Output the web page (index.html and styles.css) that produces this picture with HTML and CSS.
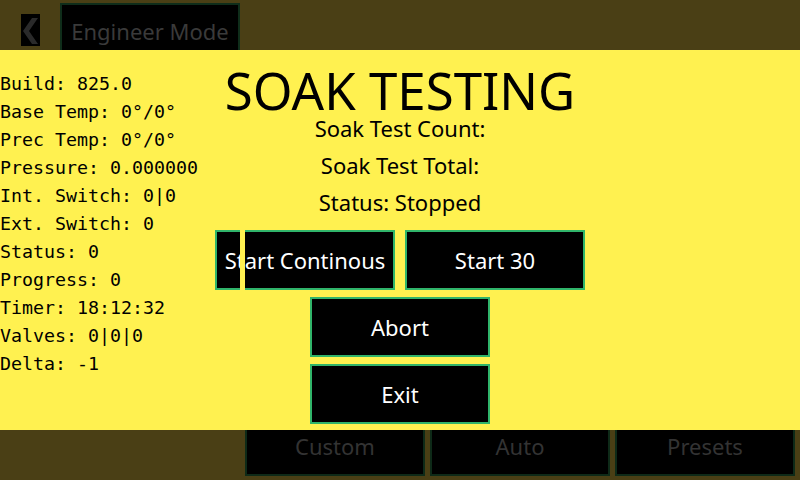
FILE: index.html
```html
<!DOCTYPE html>
<html>
<head>
<meta charset="utf-8">
<link rel="stylesheet" href="styles.css">
</head>
<body>
<div class="page">
  <header class="topbar">
    <div class="back">
      <svg width="19" height="32" viewBox="0 0 19 32"><polygon points="11,4 17,4 8,17 17,30 11,30 2,17" fill="#2a2a2a"/></svg>
    </div>
    <div class="mode">Engineer Mode</div>
  </header>
  <main class="content"></main>
  <footer class="bottombar">
    <div class="navbtn">Custom</div>
    <div class="navbtn">Auto</div>
    <div class="navbtn">Presets</div>
  </footer>
</div>
<div class="dialog">
  <div class="info">
    <div class="info-line">Build: 825.0</div>
    <div class="info-line">Base Temp: 0°/0°</div>
    <div class="info-line">Prec Temp: 0°/0°</div>
    <div class="info-line">Pressure: 0.000000</div>
    <div class="info-line">Int. Switch: 0|0</div>
    <div class="info-line">Ext. Switch: 0</div>
    <div class="info-line">Status: 0</div>
    <div class="info-line">Progress: 0</div>
    <div class="info-line">Timer: 18:12:32</div>
    <div class="info-line">Valves: 0|0|0</div>
    <div class="info-line">Delta: -1</div>
  </div>
  <div class="center">
    <h1 class="title">SOAK TESTING</h1>
    <div class="line">Soak Test Count:</div>
    <div class="line">Soak Test Total:</div>
    <div class="line">Status: Stopped</div>
    <div class="row">
      <div class="btn">Start Continous<span class="strip"></span></div>
      <div class="btn">Start 30</div>
    </div>
    <div class="btn">Abort</div>
    <div class="btn">Exit</div>
  </div>
  <div></div>
</div>
</body>
</html>
```

FILE: styles.css
```css
* { box-sizing: border-box; }
html, body { margin: 0; padding: 0; }
body {
  width: 800px;
  height: 480px;
  background: #4a3f15;
  font-family: "Noto Sans", "Open Sans", sans-serif;
  position: relative;
  overflow: hidden;
}
.page {
  height: 480px;
  display: flex;
  flex-direction: column;
}
.topbar {
  height: 50px;
  display: flex;
  align-items: flex-start;
}
.back {
  margin-left: 21px;
  margin-top: 14px;
  width: 19px;
  height: 32px;
  background: #000;
}
.back svg { display: block; }
.mode {
  margin-left: 20px;
  margin-top: 3px;
  width: 180px;
  height: 60px;
  background: #000;
  border: 2px solid #0f2d1a;
  color: #3a3a3a;
  font-size: 22px;
  text-align: center;
  padding-top: 11px;
}
.content { flex: 1; }
.bottombar {
  display: flex;
  gap: 5px;
  padding: 0 0 4px 245px;
}
.navbtn {
  width: 180px;
  height: 60px;
  background: #000;
  border: 2px solid #0e2a18;
  color: #333;
  font-size: 22px;
  display: flex;
  align-items: center;
  justify-content: center;
}
.dialog {
  position: absolute;
  top: 50px;
  left: 0;
  width: 800px;
  height: 380px;
  background: #fff150;
  display: grid;
  grid-template-columns: 1fr auto 1fr;
}
.info {
  font-family: "DejaVu Sans Mono", "Liberation Mono", monospace;
  font-size: 18.3px;
  line-height: 28px;
  padding-top: 20px;
  color: #000;
}
.info-line { white-space: nowrap; }
.center {
  display: flex;
  flex-direction: column;
  align-items: center;
}
.title {
  margin: 17px 0 0;
  font-weight: 400;
  font-size: 51px;
  line-height: 47px;
  color: #000;
}
.line {
  font-size: 22px;
  line-height: 28px;
  color: #000;
}
.line + .line { margin-top: 9px; }
.row {
  display: flex;
  gap: 10px;
  margin-top: 14px;
}
.btn {
  position: relative;
  width: 180px;
  height: 60px;
  background: #000;
  border: 2px solid #30b46a;
  color: #fff;
  font-size: 22px;
  display: flex;
  align-items: center;
  justify-content: center;
  margin-bottom: 7px;
}
.strip {
  position: absolute;
  left: 23px;
  top: -2px;
  bottom: -2px;
  width: 5px;
  background: #fff150;
}
```
